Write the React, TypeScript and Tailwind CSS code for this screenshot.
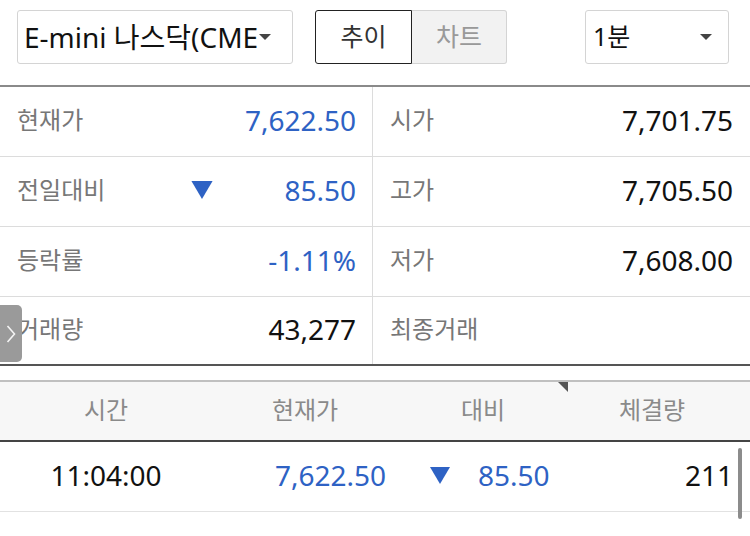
import React from 'react';

const FONT = { fontFamily: '"Noto Sans", "Noto Sans CJK KR", sans-serif' };

type InfoRow = {
  leftLabel: string;
  leftValue: string;
  leftBlue?: boolean;
  leftArrow?: boolean;
  rightLabel: string;
  rightValue: string;
};

const info: InfoRow[] = [
  { leftLabel: '현재가', leftValue: '7,622.50', leftBlue: true, rightLabel: '시가', rightValue: '7,701.75' },
  { leftLabel: '전일대비', leftValue: '85.50', leftBlue: true, leftArrow: true, rightLabel: '고가', rightValue: '7,705.50' },
  { leftLabel: '등락률', leftValue: '-1.11%', leftBlue: true, rightLabel: '저가', rightValue: '7,608.00' },
  { leftLabel: '거래량', leftValue: '43,277', rightLabel: '최종거래', rightValue: '' },
];

const ticks = [
  { time: '11:04:00', price: '7,622.50', diff: '85.50', vol: '211' },
  { time: '11:03:00', price: '7,618.75', diff: '89.25', vol: '243' },
];

const Down = ({ className }: { className: string }) => (
  <svg viewBox="0 0 20 17" className={className}>
    <path d="M0 0 H20 L10 17 Z" fill="#2e62c4" />
  </svg>
);

export default function App() {
  return (
    <div className="w-[750px] h-[536px] overflow-hidden bg-white relative" style={FONT}>
      {/* toolbar */}
      <div className="flex items-start h-[85px] pt-[10px] px-[17px]">
        <div className="w-[276px] h-[54px] border border-[#d4d4d4] rounded-[3px] flex items-center pl-[6px]">
          <span className="text-[28px] text-[#111] whitespace-nowrap">E-mini 나스닥(CME</span>
          <span className="ml-[1px] w-0 h-0 border-l-[6px] border-r-[6px] border-t-[6px] border-l-transparent border-r-transparent border-t-[#444]" />
        </div>
        <div className="ml-[22px] flex h-[54px]">
          <div className="w-[97px] border border-[#222] rounded-l-[3px] flex items-center justify-center text-[25px] text-[#333]">추이</div>
          <div className="w-[95px] border border-l-0 border-[#d4d4d4] bg-[#f2f2f2] rounded-r-[3px] flex items-center justify-center text-[25px] text-[#999]">차트</div>
        </div>
        <div className="ml-[78px] w-[144px] h-[54px] border border-[#d4d4d4] rounded-[3px] flex items-center justify-between pl-[7px] pr-[16px]">
          <span className="text-[25px] text-[#111]">1분</span>
          <span className="w-0 h-0 border-l-[6px] border-r-[6px] border-t-[6px] border-l-transparent border-r-transparent border-t-[#444]" />
        </div>
      </div>

      {/* info table */}
      <div className="border-t-2 border-[#8a8a8a] border-b-2 border-b-[#555]">
        {info.map((r, i) => (
          <div key={i} className={`flex ${i < info.length - 1 ? 'h-[70px] border-b border-[#dcdcdc]' : 'h-[67px]'}`}>
            <div className="w-[373px] border-r border-[#dcdcdc] flex items-center pl-[17px] pr-[16px] pb-[3px]">
              <span className="text-[24px] text-[#777]">{r.leftLabel}</span>
              {r.leftArrow && <Down className="ml-[86px] w-[22px] h-[18px]" />}
              <span className={`ml-auto text-[28px] ${r.leftBlue ? 'text-[#2e62c4]' : 'text-[#111]'}`}>{r.leftValue}</span>
            </div>
            <div className="flex-1 flex items-center pl-[17px] pr-[17px] pb-[3px]">
              <span className="text-[24px] text-[#777]">{r.rightLabel}</span>
              <span className="ml-auto text-[28px] text-[#111]">{r.rightValue}</span>
            </div>
          </div>
        ))}
      </div>

      {/* side tab */}
      <div className="absolute left-0 top-[305px] w-[22px] h-[57px] bg-[#9a9a9a] rounded-r-[5px] flex items-center justify-center">
        <svg viewBox="0 0 10 20" className="w-[10px] h-[20px]">
          <path d="M1.5 2 L8.5 10 L1.5 18" fill="none" stroke="#f4f4f4" strokeWidth="1.6" />
        </svg>
      </div>

      {/* ticks */}
      <div className="mt-[14px] border-t-2 border-[#c0c0c0]">
        <div className="relative flex h-[60px] bg-[#f7f7f7] border-b-2 border-[#444] text-[24px] text-[#8a8a8a]">
          <div className="w-[212px] flex items-center justify-center pb-[3px]">시간</div>
          <div className="w-[186px] flex items-center justify-center pb-[3px]">현재가</div>
          <div className="w-[170px] flex items-center justify-center pb-[3px]">대비</div>
          <div className="w-[168px] flex items-center justify-center pb-[3px]">체결량</div>
          <svg viewBox="0 0 10 10" className="absolute left-[558px] top-0 w-[10px] h-[10px]">
            <path d="M0 0 H10 V10 Z" fill="#555" />
          </svg>
        </div>
        {ticks.map((t, i) => (
          <div key={i} className="flex h-[70px] border-b border-[#e2e2e2] text-[28px]">
            <div className="w-[212px] flex items-center justify-center text-[#111] pb-[3px]">{t.time}</div>
            <div className="w-[186px] flex items-center justify-end pr-[12px] text-[#2e62c4] pb-[3px]">{t.price}</div>
            <div className="w-[170px] flex items-center pl-[32px] text-[#2e62c4] pb-[3px]">
              <Down className="w-[20px] h-[17px]" />
              <span className="ml-[28px]">{t.diff}</span>
            </div>
            <div className="w-[165px] flex items-center justify-end text-[#111] pb-[3px]">{t.vol}</div>
          </div>
        ))}
      </div>

      {/* scrollbar */}
      <div className="absolute left-[738px] top-[448px] w-[4px] h-[71px] rounded-full bg-[#8c8c8c]" />
    </div>
  );
}
